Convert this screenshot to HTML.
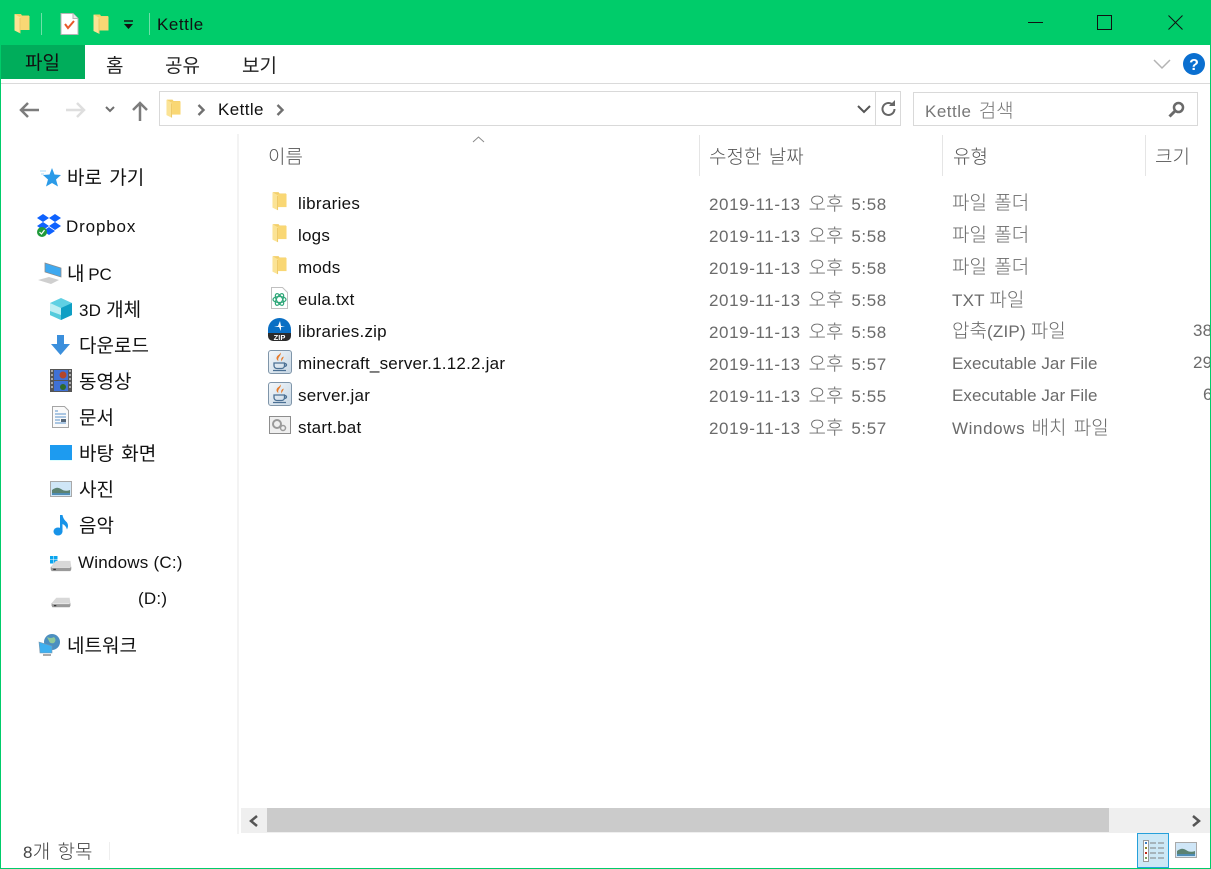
<!DOCTYPE html>
<html lang="ko"><head><meta charset="utf-8"><title>Kettle</title>
<style>
html,body{margin:0;padding:0;background:#fff}
body{width:1211px;height:869px;position:relative;overflow:hidden;font-family:"Liberation Sans","Noto Sans CJK KR",sans-serif;color:#1a1a1a}
.b{position:absolute;box-sizing:border-box}
.t{position:absolute;white-space:nowrap;font-size:17px;line-height:22px;color:#111;letter-spacing:.22px}
.g{color:#6b6b6b}
.k{font-family:"Noto Sans CJK KR",sans-serif;font-weight:300;font-size:19px;letter-spacing:0;word-spacing:2px}
.d{letter-spacing:.6px;word-spacing:2.5px}
.e{letter-spacing:.05px}
.w{letter-spacing:.6px;word-spacing:1px}
svg{position:absolute;overflow:visible}
</style></head><body>
<svg width="0" height="0" style="position:absolute"><defs>
<symbol id="fold" viewBox="0 0 16 20"><path d="M1 .5h6l1 1.500h7v14H5z" fill="#f3cf6b"/><path d="M6 2.500h9.500v14H6z" fill="#f9d774"/><path d="M.5 .5l6 3.500v16l-6-3z" fill="#fbe395"/><path d="M6 4.500v15" stroke="#e6bd55" stroke-width=".7"/></symbol>
<symbol id="jar" viewBox="0 0 24 24"><defs><linearGradient id="jg" x1="0" y1="0" x2="1" y2="1"><stop offset="0" stop-color="#f4f8fb"/><stop offset="1" stop-color="#c6d6e4"/></linearGradient></defs><rect x=".5" y=".5" width="23" height="23" rx="2.500" fill="url(#jg)" stroke="#7f95a9"/><path d="M12.500 2.500c1.500 3-3.500 4.500-2 8.500-2-1-2.500-3-1.500-4.500 1-1.500 3-2 3.500-4zM15.500 6.500c.5 2-2 3-1.500 5-1.500-1.500-1-4 1.500-5z" fill="#e67a2a"/><path d="M6 13h10.500v2.500c0 2-1.500 3-3 3h-4.500c-1.500 0-3-1-3-3z" fill="none" stroke="#4b7094" stroke-width="1.300"/><path d="M16.500 13.500c3 0 2.500 3-.5 3M5 20.500h13" stroke="#4b7094" stroke-width="1.300" fill="none"/></symbol>
<symbol id="drive" viewBox="0 0 24 14"><path d="M6 1h17l1 7H0z" fill="#d8d8d8"/><path d="M0 8h24v3l-1 2H1l-1-2z" fill="#9a9a9a"/><path d="M1 8.500h22" stroke="#f2f2f2" stroke-width="1"/><path d="M3 11h3" stroke="#333" stroke-width="1.500"/></symbol>
</defs></svg>

<!-- title bar -->
<div class="b" style="left:0;top:0;width:1211px;height:45px;background:#00cc6a"></div>
<div class="b" style="left:0;top:0;width:1px;height:869px;background:#00cc6a;z-index:5"></div>
<div class="b" style="right:0;top:0;width:1px;height:869px;background:#00cc6a;z-index:5"></div>
<div class="b" style="left:0;top:868px;width:1211px;height:1px;background:#00cc6a;z-index:5"></div>
<svg style="left:14px;top:13px" width="16" height="21"><use href="#fold" width="16" height="21"/></svg>
<div class="b" style="left:41px;top:13px;width:1px;height:22px;background:#6fe0a8"></div>
<svg style="left:60px;top:13px" width="19" height="22" viewBox="0 0 19 22"><path d="M1 .5h12l5 5v16H1z" fill="#fff" stroke="#b5b5b5"/><path d="M13 .5v5h5" fill="#e8e8e8" stroke="#b5b5b5"/><path d="M5 11l3 4 6-7" fill="none" stroke="#e8582a" stroke-width="2"/></svg>
<svg style="left:93px;top:13px" width="16" height="22"><use href="#fold" width="16" height="22"/></svg>
<svg style="left:123px;top:20px" width="11" height="11" viewBox="0 0 11 11"><path d="M1 1h9" stroke="#111" stroke-width="1.400"/><path d="M1 4h9L5.500 9z" fill="#111"/></svg>
<div class="b" style="left:149px;top:13px;width:1px;height:22px;background:#6fe0a8"></div>
<div class="t" style="left:157px;top:14px;letter-spacing:.55px">Kettle</div>
<div class="b" style="left:1028px;top:22px;width:15px;height:1px;background:#111"></div>
<div class="b" style="left:1097px;top:15px;width:15px;height:15px;border:1px solid #111"></div>
<svg style="left:1168px;top:15px" width="15" height="15"><path d="M.5.500l14 14M14.500.500l-14 14" stroke="#111" stroke-width="1"/></svg>

<!-- ribbon -->
<div class="b" style="left:1px;top:45px;width:84px;height:34px;background:#00ad5b"></div>
<div class="t k" style="left:25px;top:51px;font-weight:400">파일</div>
<div class="t k" style="left:106px;top:54px;font-weight:400;color:#222">홈</div>
<div class="t k" style="left:165px;top:54px;font-weight:400;color:#222">공유</div>
<div class="t k" style="left:242px;top:54px;font-weight:400;color:#222">보기</div>
<svg style="left:1153px;top:59px" width="18" height="11"><path d="M1 1l8 8 8-8" fill="none" stroke="#b4b4b4" stroke-width="1.500"/></svg>
<svg style="left:1183px;top:53px" width="22" height="22" viewBox="0 0 22 22"><circle cx="11" cy="11" r="11" fill="#0a6fd0"/><text x="11" y="17" text-anchor="middle" font-family="Liberation Sans" font-weight="700" font-size="16" fill="#fff">?</text></svg>
<div class="b" style="left:1px;top:83px;width:1209px;height:1px;background:#dadada"></div>

<!-- nav -->
<svg style="left:19px;top:102px" width="21" height="16"><path d="M20 8H2M9 1L2 8l7 7" fill="none" stroke="#7c7c7c" stroke-width="2.500"/></svg>
<svg style="left:65px;top:102px" width="21" height="16"><path d="M1 8h18M12 1l7 7-7 7" fill="none" stroke="#dedede" stroke-width="2.500"/></svg>
<svg style="left:105px;top:106px" width="10" height="7"><path d="M1 1l4 4 4-4" fill="none" stroke="#6f6f6f" stroke-width="2"/></svg>
<svg style="left:132px;top:101px" width="16" height="20"><path d="M8 20V2M1 9l7-7 7 7" fill="none" stroke="#7c7c7c" stroke-width="2.500"/></svg>
<div class="b" style="left:159px;top:91px;width:742px;height:35px;border:1px solid #d9d9d9"></div>
<div class="b" style="left:875px;top:92px;width:1px;height:33px;background:#d9d9d9"></div>
<svg style="left:166px;top:98px" width="15" height="21"><use href="#fold" width="15" height="21"/></svg>
<svg style="left:197px;top:104px" width="8" height="12"><path d="M1.500 1l5 5-5 5" fill="none" stroke="#707070" stroke-width="2.400"/></svg>
<div class="t" style="left:218px;top:99px;letter-spacing:.4px">Kettle</div>
<svg style="left:276px;top:104px" width="8" height="12"><path d="M1.500 1l5 5-5 5" fill="none" stroke="#707070" stroke-width="2.400"/></svg>
<svg style="left:857px;top:105px" width="14" height="9"><path d="M1 1l6 6 6-6" fill="none" stroke="#555" stroke-width="2"/></svg>
<svg style="left:880px;top:100px" width="17" height="18" viewBox="0 0 17 18"><path d="M14.500 9a6 6 0 1 1-2-4.500" fill="none" stroke="#666" stroke-width="2"/><path d="M9 6h6V0z" fill="#666"/></svg>
<div class="b" style="left:913px;top:92px;width:285px;height:34px;border:1px solid #d9d9d9"></div>
<div class="t" style="left:925px;top:99px;color:#777;letter-spacing:.5px;word-spacing:2px">Kettle <span class="k">검색</span></div>
<svg style="left:1168px;top:101px" width="17" height="17" viewBox="0 0 17 17"><circle cx="10.500" cy="6.500" r="4.500" fill="none" stroke="#6a6a6a" stroke-width="2.500"/><path d="M7 10l-5.500 5.500" stroke="#6a6a6a" stroke-width="3"/></svg>

<!-- headers -->
<svg style="left:472px;top:136px" width="13" height="7"><path d="M1 6l5.500-5L12 6" fill="none" stroke="#8a8a8a"/></svg>
<div class="t k" style="left:268px;top:145px;color:#555">이름</div>
<div class="b" style="left:699px;top:135px;width:1px;height:41px;background:#e5e5e5"></div>
<div class="t k" style="left:709px;top:145px;color:#555">수정한 날짜</div>
<div class="b" style="left:942px;top:135px;width:1px;height:41px;background:#e5e5e5"></div>
<div class="t k" style="left:953px;top:145px;color:#555">유형</div>
<div class="b" style="left:1145px;top:135px;width:1px;height:41px;background:#e5e5e5"></div>
<div class="t k" style="left:1155px;top:145px;color:#555">크기</div>

<!-- sidebar -->
<div class="b" style="left:237px;top:134px;width:2px;height:700px;background:#f3f3f3"></div>
<svg style="left:40px;top:168px" width="21" height="20" viewBox="0 0 21 20"><path d="M12 0l2.500 6.500 6.500.5-5 4.500 2 7-6-3.500-6 3.500 2-7-5-4.500 6.500-.5z" fill="#2b9be8"/><path d="M0 3h6M1 6h3" stroke="#a8d8f6"/></svg>
<div class="t k" style="left:67px;top:166px;font-weight:400">바로 가기</div>
<svg style="left:37px;top:214px" width="24" height="24" viewBox="0 0 24 24"><path d="M6 0l6 4-6 4-6-4zM18 0l6 4-6 4-6-4zM6 8l6 4-6 4-6-4zM18 8l6 4-6 4-6-4zM12 13l6 4-6 4-6-4z" fill="#0f62fe"/><circle cx="5" cy="18" r="5" fill="#1f9a3a"/><path d="M2.500 18l2 2 3-4" fill="none" stroke="#fff" stroke-width="1.200"/></svg>
<div class="t" style="left:66px;top:216px;letter-spacing:.85px">Dropbox</div>
<svg style="left:38px;top:263px" width="24" height="22" viewBox="0 0 24 22"><path d="M7 0l16 5v9L7 9z" fill="#3fa9f0" stroke="#8c8c8c" stroke-width=".8"/><path d="M0 17l11-3 10 3-8 4z" fill="#cfcfcf"/></svg>
<div class="t" style="left:67px;top:262px;letter-spacing:0;word-spacing:-1px"><span class="k" style="font-weight:400">내</span> PC</div>
<svg style="left:50px;top:298px" width="22" height="22" viewBox="0 0 22 22"><path d="M11 0l11 5v12l-11 5-11-5V5z" fill="#5fd0e3"/><path d="M0 5l11 5v12L0 17z" fill="#bdeef3"/><path d="M0 13l11 4v5L0 17z" fill="#55cbdc"/><path d="M11 10l11-5v12l-11 5z" fill="#0f9fc4"/></svg>
<div class="t" style="left:79px;top:298px">3D <span class="k" style="font-weight:400">개체</span></div>
<svg style="left:51px;top:335px" width="19" height="20" viewBox="0 0 19 20"><path d="M6 0h7v9h6l-9.500 11L0 9h6z" fill="#3b8fdc"/></svg>
<div class="t k" style="left:79px;top:334px;font-weight:400">다운로드</div>
<svg style="left:50px;top:369px" width="22" height="23" viewBox="0 0 22 23"><rect width="22" height="23" fill="#555"/><rect x="4" y="1" width="14" height="10" fill="#3f71d6"/><rect x="4" y="12" width="14" height="10" fill="#3f71d6"/><circle cx="13" cy="6" r="3.500" fill="#b3462b"/><circle cx="13" cy="18" r="3" fill="#2f6a2a"/><path d="M1 2h2M1 6h2M1 10h2M1 14h2M1 18h2M19 2h2M19 6h2M19 10h2M19 14h2M19 18h2" stroke="#fff"/></svg>
<div class="t k" style="left:79px;top:370px;font-weight:400">동영상</div>
<svg style="left:52px;top:406px" width="17" height="22" viewBox="0 0 17 22"><path d="M.5.500h12l4 4v17H.500z" fill="#fafafa" stroke="#a5a5a5"/><path d="M3 8h11M3 11h11M3 14h5M3 17h11M3 5h3" stroke="#5b93c9"/><rect x="9" y="13" width="5" height="3" fill="#567"/></svg>
<div class="t k" style="left:79px;top:406px;font-weight:400">문서</div>
<div class="b" style="left:50px;top:445px;width:22px;height:16px;background:#1d9bf0;border-bottom:1px solid #dff"></div>
<div class="t k" style="left:79px;top:442px;font-weight:400">바탕 화면</div>
<svg style="left:50px;top:481px" width="22" height="16" viewBox="0 0 22 16"><rect x=".5" y=".5" width="21" height="15" fill="#cfe6f7" stroke="#a9a9a9"/><path d="M2 9q5-4 9-1t9 1v5H2z" fill="#5b8272"/><path d="M2 12h18v2H2z" fill="#4f8db5"/></svg>
<div class="t k" style="left:79px;top:478px;font-weight:400">사진</div>
<svg style="left:53px;top:514px" width="17" height="22" viewBox="0 0 17 22"><ellipse cx="5" cy="17.500" rx="4.500" ry="4" fill="#1793e8"/><path d="M7 1h2.500q.5 4 4.500 7.500 2 3 0 7-1-4-4.500-5.500v8H7z" fill="#1793e8"/></svg>
<div class="t k" style="left:79px;top:514px;font-weight:400">음악</div>
<svg style="left:50px;top:556px" width="22" height="16"><rect width="3.500" height="3.500" x="0" y="0" fill="#0aa5ee"/><rect width="3.500" height="3.500" x="4" y="0" fill="#0aa5ee"/><rect width="3.500" height="3.500" x="0" y="4" fill="#0aa5ee"/><rect width="3.500" height="3.500" x="4" y="4" fill="#0aa5ee"/></svg>
<svg style="left:50px;top:560px" width="22" height="12"><use href="#drive" width="22" height="12"/></svg>
<div class="t" style="left:78px;top:552px">Windows (C:)</div>
<svg style="left:50px;top:597px" width="22" height="11"><use href="#drive" width="22" height="11"/></svg>
<div class="t" style="left:138px;top:588px">(D:)</div>
<svg style="left:38px;top:634px" width="23" height="22" viewBox="0 0 23 22"><circle cx="14" cy="8" r="8" fill="#4c8fc0"/><path d="M9 3q4 2 7 0 3 3 0 6-4 1-5-2z" fill="#8fc89a"/><path d="M1 8l13 4v7H2z" fill="#3fb0f0" stroke="#7b98ad" stroke-width=".6"/><path d="M5 21h8" stroke="#aaa" stroke-width="2"/></svg>
<div class="t k" style="left:67px;top:634px;font-weight:400">네트워크</div>

<!-- files -->
<svg style="left:272px;top:191px" width="15" height="20"><use href="#fold" width="15" height="20"/></svg>
<div class="t" style="left:298px;top:193px;letter-spacing:.3px">libraries</div>
<svg style="left:272px;top:223px" width="15" height="20"><use href="#fold" width="15" height="20"/></svg>
<div class="t" style="left:298px;top:225px">logs</div>
<svg style="left:272px;top:255px" width="15" height="20"><use href="#fold" width="15" height="20"/></svg>
<div class="t" style="left:298px;top:257px">mods</div>
<svg style="left:271px;top:287px" width="17" height="22" viewBox="0 0 17 22"><path d="M.5.500h11l5 5v16H.500z" fill="#fff" stroke="#c0c0c0"/><g fill="none" stroke="#2fa779" stroke-width="1.200"><ellipse cx="8.500" cy="12.500" rx="6.500" ry="3"/><ellipse cx="8.500" cy="12.500" rx="6.500" ry="3" transform="rotate(60 8.500 12.500)"/><ellipse cx="8.500" cy="12.500" rx="6.500" ry="3" transform="rotate(120 8.500 12.500)"/></g></svg>
<div class="t" style="left:298px;top:289px">eula.txt</div>
<svg style="left:268px;top:318px" width="23" height="23" viewBox="0 0 23 23"><path d="M0 11.500a11.500 11.500 0 0 1 23 0V15H0z" fill="#0a6fc4"/><path d="M0 15h23v3a5 5 0 0 1-5 5H5a5 5 0 0 1-5-5z" fill="#2b2b2b"/><path d="M12 3l-2 5-4 1h5l2 4 0-4 4-1h-4z" fill="#fff"/><text x="11.500" y="22" text-anchor="middle" font-family="Liberation Sans" font-weight="700" font-size="7.500" fill="#fff">ZIP</text></svg>
<div class="t" style="left:298px;top:321px">libraries.zip</div>
<svg style="left:268px;top:350px" width="24" height="24"><use href="#jar" width="24" height="24"/></svg>
<div class="t" style="left:298px;top:353px">minecraft_server.1.12.2.jar</div>
<svg style="left:268px;top:382px" width="24" height="24"><use href="#jar" width="24" height="24"/></svg>
<div class="t" style="left:298px;top:385px">server.jar</div>
<svg style="left:269px;top:416px" width="22" height="18" viewBox="0 0 22 18"><rect x=".5" y=".5" width="21" height="17" fill="#efefef" stroke="#8d8d8d"/><circle cx="8" cy="8" r="4" fill="none" stroke="#9a9a9a" stroke-width="2"/><circle cx="14" cy="12" r="2.500" fill="none" stroke="#9a9a9a" stroke-width="1.500"/></svg>
<div class="t" style="left:298px;top:417px">start.bat</div>

<!-- dates -->
<div class="t g d" style="left:709px;top:192px">2019-11-13 <span class="k">오후</span> 5:58</div>
<div class="t g d" style="left:709px;top:224px">2019-11-13 <span class="k">오후</span> 5:58</div>
<div class="t g d" style="left:709px;top:256px">2019-11-13 <span class="k">오후</span> 5:58</div>
<div class="t g d" style="left:709px;top:288px">2019-11-13 <span class="k">오후</span> 5:58</div>
<div class="t g d" style="left:709px;top:320px">2019-11-13 <span class="k">오후</span> 5:58</div>
<div class="t g d" style="left:709px;top:352px">2019-11-13 <span class="k">오후</span> 5:57</div>
<div class="t g d" style="left:709px;top:384px">2019-11-13 <span class="k">오후</span> 5:55</div>
<div class="t g d" style="left:709px;top:416px">2019-11-13 <span class="k">오후</span> 5:57</div>

<!-- types -->
<div class="t g k" style="left:952px;top:191px">파일 폴더</div>
<div class="t g k" style="left:952px;top:223px">파일 폴더</div>
<div class="t g k" style="left:952px;top:255px">파일 폴더</div>
<div class="t g" style="left:952px;top:288px">TXT <span class="k">파일</span></div>
<div class="t g" style="left:952px;top:319px"><span class="k">압축</span>(ZIP) <span class="k">파일</span></div>
<div class="t g e" style="left:952px;top:353px">Executable Jar File</div>
<div class="t g e" style="left:952px;top:385px">Executable Jar File</div>
<div class="t g w" style="left:952px;top:416px">Windows <span class="k">배치 파일</span></div>
<div class="t g" style="left:1193px;top:320px">38</div>
<div class="t g" style="left:1193px;top:352px">29</div>
<div class="t g" style="left:1203px;top:384px">6</div>

<!-- scrollbar -->
<div class="b" style="left:241px;top:808px;width:969px;height:25px;background:#efefef"></div>
<div class="b" style="left:267px;top:808px;width:842px;height:24px;background:#cbcbcb"></div>
<svg style="left:248px;top:815px" width="11" height="12"><path d="M9 1L3 6l6 5" fill="none" stroke="#555" stroke-width="2.500"/></svg>
<svg style="left:1191px;top:815px" width="11" height="12"><path d="M2 1l6 5-6 5" fill="none" stroke="#555" stroke-width="2.500"/></svg>

<!-- status -->
<div class="t" style="left:23px;top:840px;color:#444">8<span class="k">개 항목</span></div>
<div class="b" style="left:109px;top:842px;width:1px;height:18px;background:#eeeeee"></div>
<div class="b" style="left:1137px;top:833px;width:32px;height:35px;background:#cce8f6;border:1px solid #26a0da"></div>
<svg style="left:1143px;top:840px" width="22" height="22" viewBox="0 0 22 22"><rect x="0.500" y=".5" width="5" height="21" fill="#fff" stroke="#999"/><rect x="2" y="2" width="2" height="2" fill="#3b7fc4"/><rect x="2" y="7" width="2" height="2" fill="#8a8a2a"/><rect x="2" y="12" width="2" height="2" fill="#c02a1a"/><rect x="2" y="17" width="2" height="2" fill="#7aa05a"/><path d="M7 3h6M15 3h6M7 8h6M15 8h6M7 13h6M15 13h6M7 18h6M15 18h6" stroke="#808080"/></svg>
<svg style="left:1175px;top:842px" width="22" height="16" viewBox="0 0 22 16"><rect x=".5" y=".5" width="21" height="15" fill="#cfe6f7" stroke="#a9a9a9"/><path d="M2 9q5-4 9-1t9 1v5H2z" fill="#5b8272"/><path d="M2 12h18v2H2z" fill="#4f8db5"/></svg>
</body></html>
